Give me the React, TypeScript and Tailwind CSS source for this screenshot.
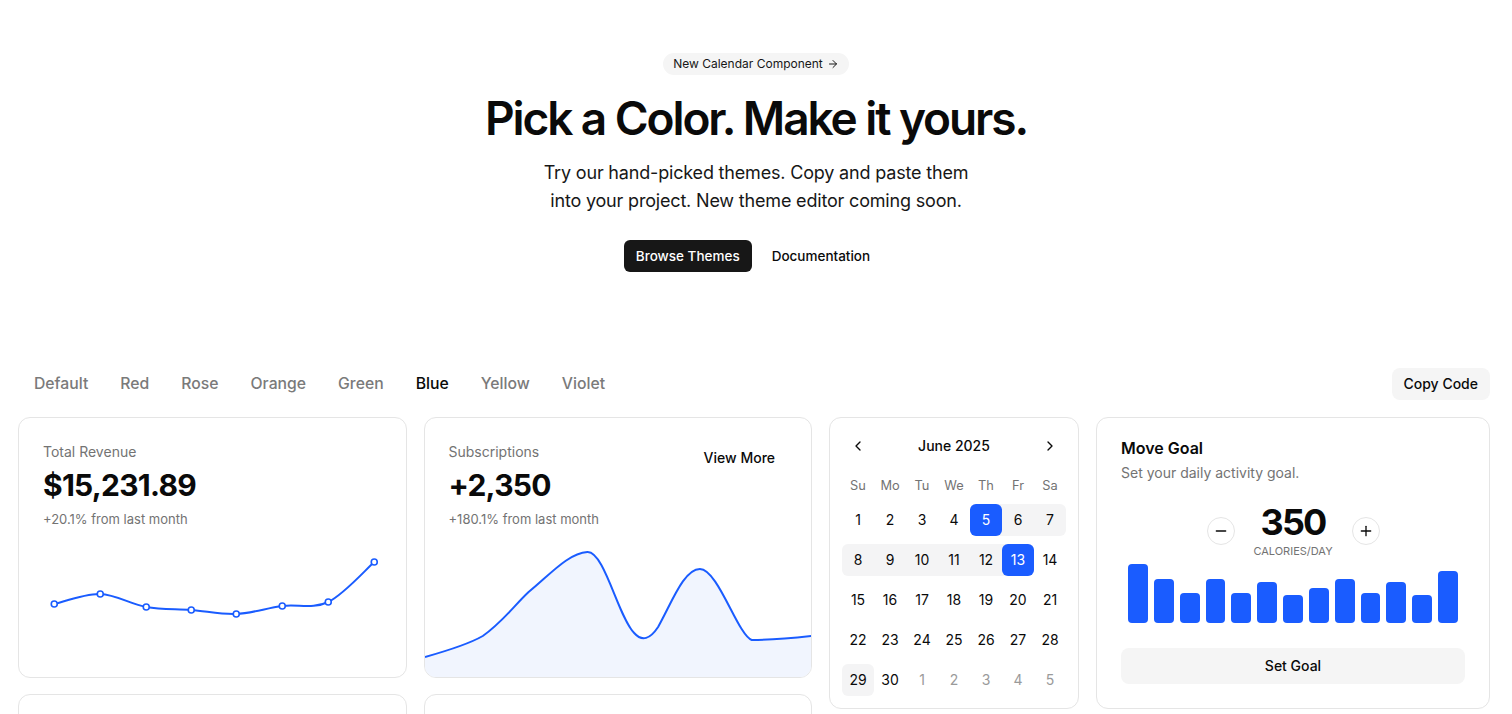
import { ArrowRight, ChevronLeft, ChevronRight, Minus, Plus } from "lucide-react";

const BLUE = "#1a5cff";

const tabs = ["Default", "Red", "Rose", "Orange", "Green", "Blue", "Yellow", "Violet"];

const revenuePoints: [number, number][] = [
  [35, 54],
  [81, 44],
  [127, 57],
  [172, 60],
  [217, 64],
  [263, 56],
  [309, 52],
  [355, 12],
];

const bars = [59, 44, 30, 44, 30, 41, 28, 35, 44, 30, 41, 28, 52];

function smoothPath(pts: [number, number][]) {
  let d = `M${pts[0][0]},${pts[0][1]}`;
  for (let i = 0; i < pts.length - 1; i++) {
    const p0 = pts[i - 1] || pts[i];
    const p1 = pts[i];
    const p2 = pts[i + 1];
    const p3 = pts[i + 2] || p2;
    const c1x = p1[0] + (p2[0] - p0[0]) / 6;
    const c1y = p1[1] + (p2[1] - p0[1]) / 6;
    const c2x = p2[0] - (p3[0] - p1[0]) / 6;
    const c2y = p2[1] - (p3[1] - p1[1]) / 6;
    d += ` C${c1x},${c1y} ${c2x},${c2y} ${p2[0]},${p2[1]}`;
  }
  return d;
}

function RevenueCard() {
  return (
    <div className="flex h-[261px] flex-col rounded-xl border border-[#e5e5e5] bg-white">
      <div className="px-6 pt-6">
        <div className="text-sm text-[#737373]">Total Revenue</div>
        <div className="mt-[5px] text-3xl font-bold tracking-tight text-[#0a0a0a]">$15,231.89</div>
        <div className="mt-[7px] text-[13px] text-[#737373]">+20.1% from last month</div>
      </div>
      <svg viewBox="0 0 386 100" className="mt-[20px] h-[100px] w-full">
        <path d={smoothPath(revenuePoints)} fill="none" stroke={BLUE} strokeWidth="2" />
        {revenuePoints.map(([x, y]) => (
          <circle key={x} cx={x} cy={y} r="3" fill="white" stroke={BLUE} strokeWidth="1.6" />
        ))}
      </svg>
    </div>
  );
}

function SubscriptionsCard() {
  const line =
    "M0,110 C25,103 44,97 58,89 C78,75 90,58 104,45 C125,28 144,6 163,5 C180,4 194,70 210,86 C218,95 226,92 234,80 C248,55 260,22 276,22 C294,22 314,88 328,93 C350,93 370,91 388,89";
  return (
    <div className="flex h-[261px] flex-col overflow-hidden rounded-xl border border-[#e5e5e5] bg-white">
      <div className="flex items-start justify-between pl-6 pr-6 pt-6">
        <div>
          <div className="text-sm text-[#737373]">Subscriptions</div>
          <div className="mt-[5px] text-3xl font-bold tracking-tight text-[#0a0a0a]">+2,350</div>
          <div className="mt-[7px] text-[13px] text-[#737373]">+180.1% from last month</div>
        </div>
        <button className="h-8 px-3 text-sm font-medium text-[#0a0a0a]">View More</button>
      </div>
      <svg viewBox="0 0 388 130" preserveAspectRatio="none" className="mt-auto h-[130px] w-full">
        <path d={`${line} L388,130 L0,130 Z`} fill="#f1f5fe" />
        <path d={line} fill="none" stroke={BLUE} strokeWidth="2" />
      </svg>
    </div>
  );
}

type Day = { n: number; out?: boolean };

function CalendarCard() {
  const weeks: Day[][] = [
    [1, 2, 3, 4, 5, 6, 7].map((n) => ({ n })),
    [8, 9, 10, 11, 12, 13, 14].map((n) => ({ n })),
    [15, 16, 17, 18, 19, 20, 21].map((n) => ({ n })),
    [22, 23, 24, 25, 26, 27, 28].map((n) => ({ n })),
    [{ n: 29 }, { n: 30 }, { n: 1, out: true }, { n: 2, out: true }, { n: 3, out: true }, { n: 4, out: true }, { n: 5, out: true }],
  ];

  const cellBg = (wi: number, d: Day) => {
    if (d.out) return "";
    if (wi === 0 && d.n === 5) return "bg-[#f4f4f5] rounded-l-md";
    if (wi === 0 && d.n === 7) return "bg-[#f4f4f5] rounded-r-md";
    if (wi === 0 && d.n === 6) return "bg-[#f4f4f5]";
    if (wi === 1 && d.n === 8) return "bg-[#f4f4f5] rounded-l-md";
    if (wi === 1 && d.n >= 9 && d.n <= 12) return "bg-[#f4f4f5]";
    if (wi === 1 && d.n === 13) return "bg-[#f4f4f5] rounded-r-md";
    if (d.n === 29) return "bg-[#f4f4f5] rounded-md";
    return "";
  };

  return (
    <div className="w-[250px] shrink-0 self-start rounded-xl border border-[#e5e5e5] bg-white p-3">
      <div className="flex h-8 items-center justify-between">
        <button className="flex size-8 items-center justify-center text-[#0a0a0a]">
          <ChevronLeft className="size-4" />
        </button>
        <div className="text-sm font-medium text-[#0a0a0a]">June 2025</div>
        <button className="flex size-8 items-center justify-center text-[#0a0a0a]">
          <ChevronRight className="size-4" />
        </button>
      </div>
      <div className="mt-[14px] grid grid-cols-7">
        {["Su", "Mo", "Tu", "We", "Th", "Fr", "Sa"].map((d) => (
          <div key={d} className="h-5 text-center text-[12.8px] leading-5 text-[#737373]">
            {d}
          </div>
        ))}
      </div>
      <div className="mt-2 flex flex-col gap-2">
        {weeks.map((w, wi) => (
          <div key={wi} className="grid grid-cols-7">
            {w.map((d, di) => {
              const selected = !d.out && ((wi === 0 && d.n === 5) || (wi === 1 && d.n === 13));
              return (
                <div key={di} className={`h-8 ${cellBg(wi, d)}`}>
                  <div
                    className={`flex h-8 items-center justify-center text-sm ${
                      selected
                        ? "rounded-md bg-[#1a5cff] text-white"
                        : d.out
                          ? "text-[#9a9a9a]"
                          : "text-[#0a0a0a]"
                    }`}
                  >
                    {d.n}
                  </div>
                </div>
              );
            })}
          </div>
        ))}
      </div>
    </div>
  );
}

function MoveGoalCard() {
  return (
    <div className="flex-1 self-start rounded-xl border border-[#e5e5e5] bg-white px-6 pb-6 pt-[22px]">
      <div className="text-base font-semibold leading-none text-[#0a0a0a]">Move Goal</div>
      <div className="mt-[7px] text-sm text-[#737373]">Set your daily activity goal.</div>
      <div className="mt-[21px] flex items-center justify-center gap-4">
        <button className="flex size-7 items-center justify-center rounded-full border border-[#e5e5e5] text-[#0a0a0a]">
          <Minus className="size-4" />
        </button>
        <div className="w-[85px] text-center">
          <div className="text-4xl font-bold leading-none tracking-tighter text-[#0a0a0a]">350</div>
          <div className="mt-1 whitespace-nowrap text-[11px] uppercase leading-[14px] text-[#737373]">Calories/day</div>
        </div>
        <button className="flex size-7 items-center justify-center rounded-full border border-[#e5e5e5] text-[#0a0a0a]">
          <Plus className="size-4" />
        </button>
      </div>
      <div className="mt-[5px] flex h-[60px] items-end gap-[6px] px-[7px]">
        {bars.map((h, i) => (
          <div key={i} className="flex-1 rounded-[4px] bg-[#1a5cff]" style={{ height: h }} />
        ))}
      </div>
      <button className="mt-[25px] h-9 w-full rounded-lg bg-[#f5f5f5] text-sm font-medium text-[#0a0a0a]">
        Set Goal
      </button>
    </div>
  );
}

export default function App() {
  return (
    <div className="min-h-screen bg-white font-['Inter',sans-serif] text-[#0a0a0a]">
      {/* Hero */}
      <div className="flex flex-col items-center pt-[53px]">
        <div className="flex h-[22px] items-center gap-1 rounded-full bg-[#f5f5f5] px-[10px] text-xs text-[#171717]">
          New Calendar Component
          <ArrowRight className="size-3" />
        </div>
        <h1 className="mt-[19px] text-[46px] font-semibold leading-[48px] tracking-[-0.045em] text-[#0a0a0a]">
          Pick a Color. Make it yours.
        </h1>
        <p className="mt-[17px] text-center text-lg leading-7 tracking-[-0.01em] text-[#171717]">
          Try our hand-picked themes. Copy and paste them
          <br />
          into your project. New theme editor coming soon.
        </p>
        <div className="mt-[25px] flex items-center gap-2 pr-[6px]">
          <button className="h-8 rounded-md bg-[#171717] px-3 text-[13.5px] font-medium text-white">Browse Themes</button>
          <button className="h-8 rounded-md px-3 text-[13.5px] font-medium text-[#0a0a0a]">Documentation</button>
        </div>
      </div>

      {/* Theme tabs */}
      <div className="mt-[96px] flex items-center justify-between pl-[18px] pr-[22px]">
        <div className="flex items-center">
          {tabs.map((t) => (
            <button
              key={t}
              className={`h-8 px-4 text-[15.75px] font-medium ${t === "Blue" ? "text-[#0a0a0a]" : "text-[#7a7a7a]"}`}
            >
              {t}
            </button>
          ))}
        </div>
        <button className="h-8 rounded-lg bg-[#f5f5f5] px-3 text-sm font-medium text-[#0a0a0a]">Copy Code</button>
      </div>

      {/* Cards */}
      <div className="mt-[17px] flex gap-[17px] pl-[18px] pr-[22px]">
        <div className="grid w-[794px] shrink-0 grid-cols-2 gap-x-[17px] gap-y-4">
          <RevenueCard />
          <SubscriptionsCard />
          <div className="h-[200px] rounded-xl border border-[#e5e5e5] bg-white" />
          <div className="h-[200px] rounded-xl border border-[#e5e5e5] bg-white" />
        </div>
        <CalendarCard />
        <MoveGoalCard />
      </div>
    </div>
  );
}
